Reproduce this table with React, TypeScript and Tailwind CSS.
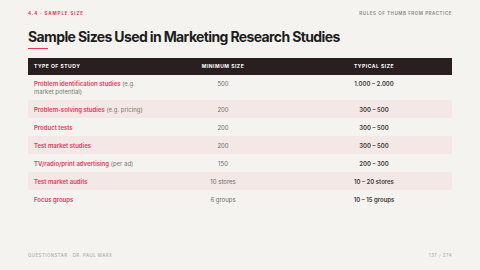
const rows = [
  { type: "Problem identification studies", note: "(e.g. market potential)", min: "500", typical: "1.000 – 2.000" },
  { type: "Problem-solving studies", note: "(e.g. pricing)", min: "200", typical: "300 – 500" },
  { type: "Product tests", note: "", min: "200", typical: "300 – 500" },
  { type: "Test market studies", note: "", min: "200", typical: "300 – 500" },
  { type: "TV/radio/print advertising", note: "(per ad)", min: "150", typical: "200 – 300" },
  { type: "Test market audits", note: "", min: "10 stores", typical: "10 – 20 stores" },
  { type: "Focus groups", note: "", min: "6 groups", typical: "10 – 15 groups" },
]

export default function App() {
  return (
    <div
      className="flex h-[270px] w-[480px] flex-col bg-[#f5f3ef] px-[28px] text-[#2a2a2a]"
      style={{ fontFamily: "Inter, 'Liberation Sans', sans-serif" }}
    >
      <div className="flex items-center justify-between pt-[10.5px] text-[4.5px] font-bold uppercase tracking-[0.2em]">
        <span className="text-[#e0395a]">4.4 · Sample Size</span>
        <span className="font-semibold tracking-[0.12em] text-[#8a8784]">Rules of thumb from practice</span>
      </div>

      <h1 className="mt-[12.5px] text-[14px] font-bold leading-none tracking-[-0.045em] text-[#1e1d1d]">
        Sample Sizes Used in Marketing Research Studies
      </h1>
      <div className="mt-[4px] h-[1.5px] w-[20px] bg-[#e0395a]" />

      <table className="mt-[8.5px] w-full table-fixed border-collapse text-[6px]">
        <colgroup>
          <col className="w-[122px]" />
          <col className="w-[146px]" />
          <col className="w-[156px]" />
        </colgroup>
        <thead>
          <tr className="h-[17px] bg-[#2a1f20] text-[5px] font-bold uppercase tracking-[0.1em] text-white">
            <th className="px-[6px] text-left">Type of Study</th>
            <th className="px-[6px] text-center">Minimum Size</th>
            <th className="px-[6px] text-center">Typical Size</th>
          </tr>
        </thead>
        <tbody>
          {rows.map((r, i) => (
            <tr key={r.type} className={i % 2 === 1 ? "bg-[#f3e8e5]" : ""}>
              <td className="px-[6px] py-[5.25px] leading-[7.5px]">
                <span className="font-semibold text-[#de3a5c]">{r.type}</span>
                {r.note && <span className="text-[#7a7673]"> {r.note}</span>}
              </td>
              <td className="px-[6px] pt-[5.25px] text-center align-top leading-[7.5px] text-[#6e6a67]">{r.min}</td>
              <td className="px-[6px] pt-[5.25px] text-center align-top leading-[7.5px] font-semibold text-[#3d3a38]">{r.typical}</td>
            </tr>
          ))}
        </tbody>
      </table>

      <div className="mt-auto flex items-center justify-between pb-[11px] text-[4.3px] font-medium uppercase tracking-[0.12em] text-[#b0aca8]">
        <span>Questionstar · Dr. Paul Marx</span>
        <span>137 / 274</span>
      </div>
    </div>
  )
}
